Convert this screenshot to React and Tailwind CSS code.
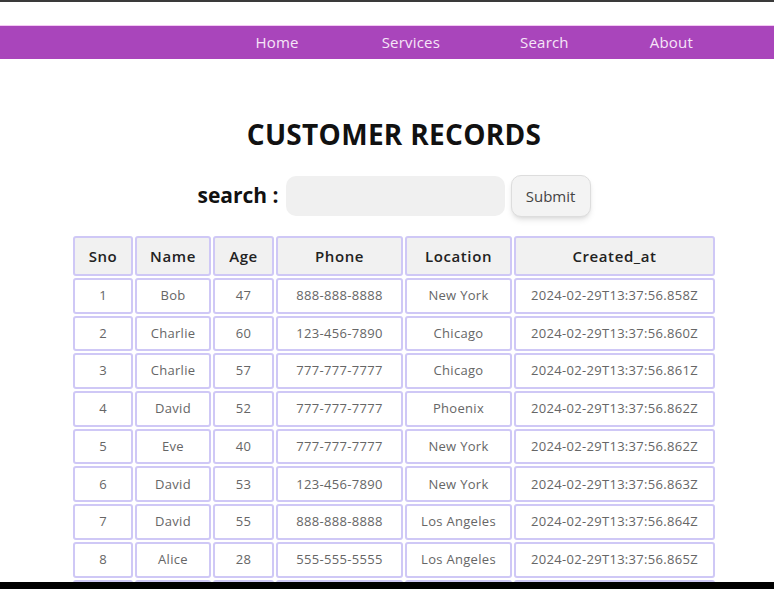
import React from "react";

const rows = [
  [1, "Bob", 47, "888-888-8888", "New York", "2024-02-29T13:37:56.858Z"],
  [2, "Charlie", 60, "123-456-7890", "Chicago", "2024-02-29T13:37:56.860Z"],
  [3, "Charlie", 57, "777-777-7777", "Chicago", "2024-02-29T13:37:56.861Z"],
  [4, "David", 52, "777-777-7777", "Phoenix", "2024-02-29T13:37:56.862Z"],
  [5, "Eve", 40, "777-777-7777", "New York", "2024-02-29T13:37:56.862Z"],
  [6, "David", 53, "123-456-7890", "New York", "2024-02-29T13:37:56.863Z"],
  [7, "David", 55, "888-888-8888", "Los Angeles", "2024-02-29T13:37:56.864Z"],
  [8, "Alice", 28, "555-555-5555", "Los Angeles", "2024-02-29T13:37:56.865Z"],
];

const headers = ["Sno", "Name", "Age", "Phone", "Location", "Created_at"];
const widths = ["w-[60px]", "w-[76px]", "w-[61px]", "w-[127px]", "w-[107px]", "w-[201px]"];

export default function App() {
  return (
    <div
      className="h-[589px] overflow-hidden bg-white"
      style={{ fontFamily: '"Open Sans", "Liberation Sans", sans-serif' }}
    >
      <div className="h-[2px] bg-[#3a3a3a]" />
      <div className="h-[23px] bg-white" />
      <nav className="h-[34px] bg-[#a945bb] border-t border-[#f4c8f4] flex items-center justify-end pr-[81px] text-[15px] text-[#f6e6f8] tracking-[0.2px]">
        <a className="mr-[83px]">Home</a>
        <a className="mr-[80px]">Services</a>
        <a className="mr-[81px]">Search</a>
        <a>About</a>
      </nav>

      <main className="pl-[14px] flex flex-col items-center">
        <h1 className="mt-[57px] text-[28px] font-bold text-[#111] leading-[36px] tracking-[0.3px]">
          CUSTOMER RECORDS
        </h1>
        <div className="mt-[23px] flex items-center">
          <span className="text-[21px] font-bold text-[#111] mr-[7px]">search :</span>
          <input className="w-[219px] h-[40px] rounded-[10px] bg-[#f0f0f0] outline-none px-3" />
          <button className="ml-[6px] w-[80px] h-[42px] rounded-[10px] bg-[#f3f3f3] border border-[#dddddd] shadow-md text-[15px] text-[#444]">
            Submit
          </button>
        </div>

        <table className="mt-[17px] border-separate border-spacing-[2px] table-fixed">
          <thead>
            <tr>
              {headers.map((h, i) => (
                <th
                  key={h}
                  className={`${widths[i]} h-[40px] border-2 border-[#cfc8f6] rounded-[3px] bg-[#f1f1f1] text-[15px] font-semibold text-[#222] text-center tracking-[0.6px]`}
                >
                  {h}
                </th>
              ))}
            </tr>
          </thead>
          <tbody>
            {rows.map((r) => (
              <tr key={r[0]}>
                {r.map((c, i) => (
                  <td
                    key={i}
                    className="h-[35.7px] border-2 border-[#cfc8f6] rounded-[3px] text-[13px] text-[#666] text-center tracking-[0.3px]"
                  >
                    {c}
                  </td>
                ))}
              </tr>
            ))}
            <tr>
              {headers.map((h) => (
                <td key={h} className="h-[35.7px] border-2 border-[#cfc8f6] rounded-[3px]" />
              ))}
            </tr>
          </tbody>
        </table>
      </main>

      <div className="fixed left-0 right-0 bottom-0 h-[7px] bg-black" />
    </div>
  );
}
